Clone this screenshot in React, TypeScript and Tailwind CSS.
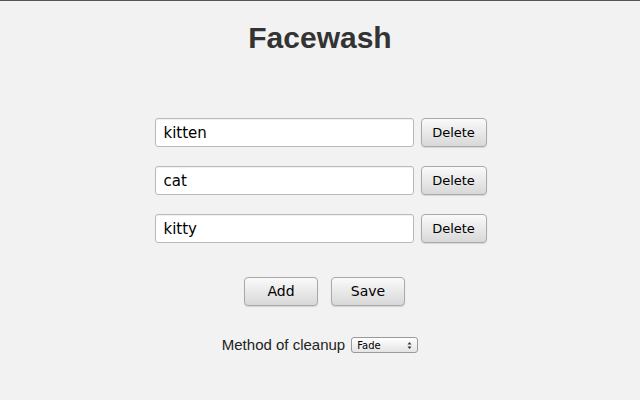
const words = ['kitten', 'cat', 'kitty'];

const btn =
  'rounded-[4px] border border-[#a9a9a9] bg-gradient-to-b from-[#fafafa] to-[#d8d8d8] text-black shadow-[0_1px_1px_rgba(0,0,0,0.12)]';

export default function App() {
  return (
    <div className="w-[640px] h-[400px] bg-[#f2f2f2] border-t border-[#555] flex flex-col items-center font-['Liberation_Sans',Arial,sans-serif]">
      <h1 className="mt-[19px] text-[30px] leading-[36px] font-bold text-[#333]">Facewash</h1>

      <div className="mt-[62px] flex flex-col gap-[19px] ml-[1px]">
        {words.map((w) => (
          <div key={w} className="flex items-center gap-[7px]">
            <input
              defaultValue={w}
              className="w-[259px] h-[29px] rounded-[3px] border border-[#b8b8b8] bg-white px-[8px] text-[15px] text-black font-['DejaVu_Sans',sans-serif] outline-none shadow-[inset_0_1px_1px_rgba(0,0,0,0.06)]"
            />
            <button className={`${btn} w-[66px] h-[29px] text-[13px] font-['DejaVu_Sans',sans-serif]`}>
              Delete
            </button>
          </div>
        ))}
      </div>

      <div className="mt-[34px] ml-[9px] flex gap-[13px]">
        <button className={`${btn} w-[74px] h-[29px] text-[14px] font-['DejaVu_Sans',sans-serif]`}>Add</button>
        <button className={`${btn} w-[74px] h-[29px] text-[14px] font-['DejaVu_Sans',sans-serif]`}>Save</button>
      </div>

      <div className="mt-[28px] flex items-center gap-[6px] text-[15px] text-[#222]">
        <span>Method of cleanup</span>
        <div className="relative w-[67px] h-[16px] rounded-[3px] border border-[#9a9a9a] bg-gradient-to-b from-white to-[#e4e4e4] flex items-center pl-[5px] text-[10px] font-['DejaVu_Sans',sans-serif] text-black">
          Fade
          <svg className="absolute right-[5px] top-[3px]" width="5" height="9" viewBox="0 0 5 9">
            <path d="M0.5 3.5 L2.5 1 L4.5 3.5 Z M0.5 5.5 L2.5 8 L4.5 5.5 Z" fill="#333" />
          </svg>
        </div>
      </div>
    </div>
  );
}
